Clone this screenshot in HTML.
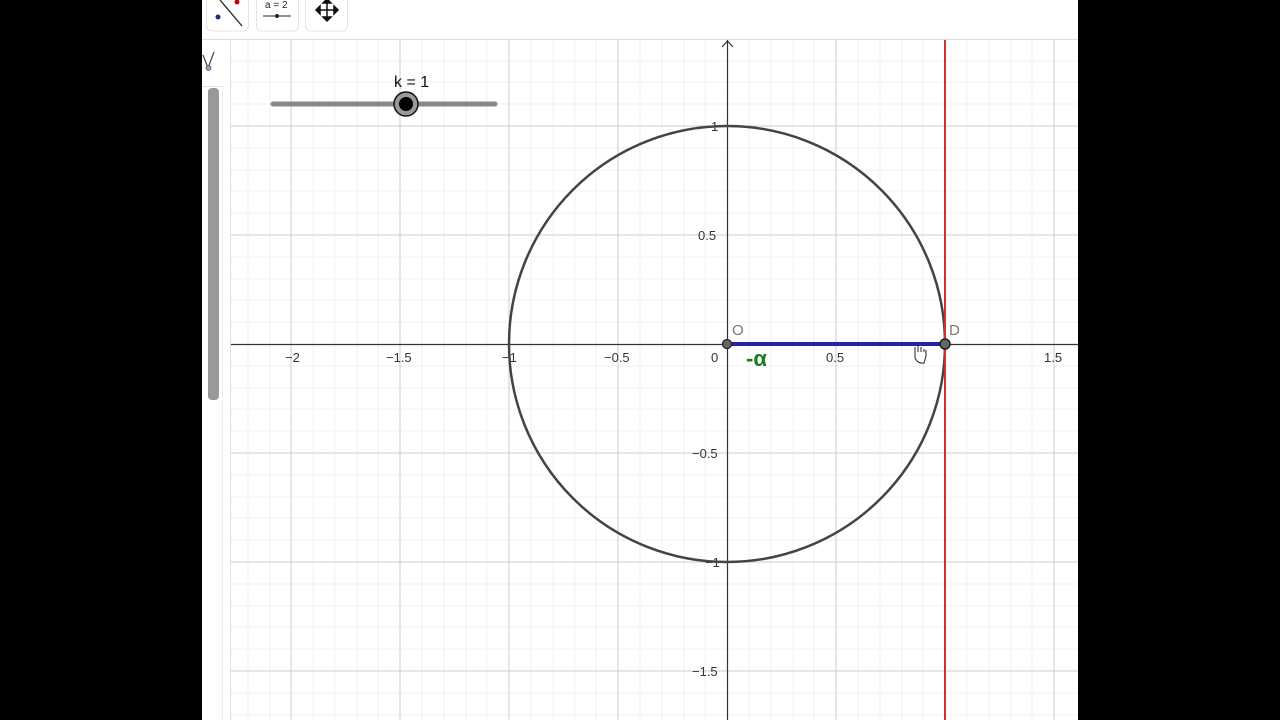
<!DOCTYPE html>
<html><head><style>
html,body{margin:0;padding:0;background:#000;width:1280px;height:720px;overflow:hidden}
svg{display:block}
text{font-family:"Liberation Sans",sans-serif}
</style></head><body>
<svg width="1280" height="720" xmlns="http://www.w3.org/2000/svg">
<rect x="0" y="0" width="1280" height="720" fill="#000"/>
<rect x="202" y="0" width="876" height="720" fill="#fff"/>
<line x1="202" y1="39.5" x2="1078" y2="39.5" stroke="#ddd"/>
<rect x="206.5" y="-5" width="42" height="36" rx="5" fill="#fff" stroke="#e4e4e4"/>
<rect x="256.5" y="-5" width="42" height="36" rx="5" fill="#fff" stroke="#e4e4e4"/>
<rect x="305.5" y="-5" width="42" height="36" rx="5" fill="#fff" stroke="#e4e4e4"/>
<line x1="220" y1="0" x2="242" y2="26" stroke="#222" stroke-width="1.3"/>
<circle cx="237" cy="2" r="2.5" fill="#c00"/>
<circle cx="218" cy="17" r="2.5" fill="#1a2a8a"/>
<text x="265" y="8" font-size="10" fill="#222">a = 2</text>
<line x1="263" y1="16" x2="291" y2="16" stroke="#222" stroke-width="1"/>
<circle cx="277" cy="16" r="2" fill="#222"/>
<g stroke="#111" stroke-width="1.5" fill="#111">
<line x1="327" y1="0" x2="327" y2="20"/><line x1="317" y1="10" x2="337" y2="10"/>
<path d="M323 3 L327 -1 L331 3Z M323 17 L327 21 L331 17Z M320 6 L316 10 L320 14Z M334 6 L338 10 L334 14Z"/>
</g>
<line x1="230.5" y1="40" x2="230.5" y2="720" stroke="#e0e0e0"/>
<line x1="202" y1="86.5" x2="222" y2="86.5" stroke="#e0e0e0"/>
<line x1="222.5" y1="86" x2="222.5" y2="720" stroke="#eee"/>
<path d="M203 55 L208 68 L214 52" fill="none" stroke="#444" stroke-width="1.2"/>
<circle cx="208.5" cy="68" r="2.5" fill="#9a9ad0" stroke="#555" stroke-width="0.8"/>
<rect x="208" y="88" width="11" height="312" rx="4" fill="#999"/>
<g stroke="#f0f0f0" stroke-width="1" shape-rendering="crispEdges">
<line x1="248" y1="40" x2="248" y2="720"/><line x1="270" y1="40" x2="270" y2="720"/><line x1="313" y1="40" x2="313" y2="720"/><line x1="335" y1="40" x2="335" y2="720"/><line x1="357" y1="40" x2="357" y2="720"/><line x1="378" y1="40" x2="378" y2="720"/><line x1="422" y1="40" x2="422" y2="720"/><line x1="444" y1="40" x2="444" y2="720"/><line x1="466" y1="40" x2="466" y2="720"/><line x1="487" y1="40" x2="487" y2="720"/><line x1="531" y1="40" x2="531" y2="720"/><line x1="553" y1="40" x2="553" y2="720"/><line x1="575" y1="40" x2="575" y2="720"/><line x1="596" y1="40" x2="596" y2="720"/><line x1="640" y1="40" x2="640" y2="720"/><line x1="662" y1="40" x2="662" y2="720"/><line x1="684" y1="40" x2="684" y2="720"/><line x1="705" y1="40" x2="705" y2="720"/><line x1="749" y1="40" x2="749" y2="720"/><line x1="771" y1="40" x2="771" y2="720"/><line x1="793" y1="40" x2="793" y2="720"/><line x1="814" y1="40" x2="814" y2="720"/><line x1="858" y1="40" x2="858" y2="720"/><line x1="880" y1="40" x2="880" y2="720"/><line x1="902" y1="40" x2="902" y2="720"/><line x1="923" y1="40" x2="923" y2="720"/><line x1="967" y1="40" x2="967" y2="720"/><line x1="989" y1="40" x2="989" y2="720"/><line x1="1011" y1="40" x2="1011" y2="720"/><line x1="1032" y1="40" x2="1032" y2="720"/>
<line x1="231" y1="61" x2="1078" y2="61"/><line x1="231" y1="82" x2="1078" y2="82"/><line x1="231" y1="104" x2="1078" y2="104"/><line x1="231" y1="148" x2="1078" y2="148"/><line x1="231" y1="170" x2="1078" y2="170"/><line x1="231" y1="191" x2="1078" y2="191"/><line x1="231" y1="213" x2="1078" y2="213"/><line x1="231" y1="257" x2="1078" y2="257"/><line x1="231" y1="279" x2="1078" y2="279"/><line x1="231" y1="300" x2="1078" y2="300"/><line x1="231" y1="322" x2="1078" y2="322"/><line x1="231" y1="366" x2="1078" y2="366"/><line x1="231" y1="388" x2="1078" y2="388"/><line x1="231" y1="409" x2="1078" y2="409"/><line x1="231" y1="431" x2="1078" y2="431"/><line x1="231" y1="475" x2="1078" y2="475"/><line x1="231" y1="497" x2="1078" y2="497"/><line x1="231" y1="518" x2="1078" y2="518"/><line x1="231" y1="540" x2="1078" y2="540"/><line x1="231" y1="584" x2="1078" y2="584"/><line x1="231" y1="606" x2="1078" y2="606"/><line x1="231" y1="627" x2="1078" y2="627"/><line x1="231" y1="649" x2="1078" y2="649"/><line x1="231" y1="693" x2="1078" y2="693"/><line x1="231" y1="715" x2="1078" y2="715"/>
</g>
<g stroke="#cdcdcd" stroke-width="1" shape-rendering="crispEdges">
<line x1="291" y1="40" x2="291" y2="720"/><line x1="400" y1="40" x2="400" y2="720"/><line x1="509" y1="40" x2="509" y2="720"/><line x1="618" y1="40" x2="618" y2="720"/><line x1="836" y1="40" x2="836" y2="720"/><line x1="945" y1="40" x2="945" y2="720"/><line x1="1054" y1="40" x2="1054" y2="720"/>
<line x1="231" y1="126" x2="1078" y2="126"/><line x1="231" y1="235" x2="1078" y2="235"/><line x1="231" y1="453" x2="1078" y2="453"/><line x1="231" y1="562" x2="1078" y2="562"/><line x1="231" y1="671" x2="1078" y2="671"/>
</g>
<g stroke="#333" stroke-width="1.2">
<line x1="231" y1="344.5" x2="1078" y2="344.5"/>
<line x1="727.5" y1="40" x2="727.5" y2="720"/>
<path d="M722 47 L727.5 41 L733 47" fill="none"/>
</g>
<g font-size="13" fill="#333">
<text x="285" y="362">−2</text><text x="386" y="362">−1.5</text><text x="502" y="362">−1</text><text x="604" y="362">−0.5</text><text x="711" y="362">0</text><text x="826" y="362">0.5</text><text x="1044" y="362">1.5</text>
<text x="711" y="131">1</text><text x="698" y="240">0.5</text><text x="692" y="458">−0.5</text><text x="705" y="567">−1</text><text x="692" y="676">−1.5</text>
</g>
<circle cx="727" cy="344" r="218" fill="none" stroke="#444" stroke-width="2.5"/>
<line x1="945" y1="40" x2="945" y2="720" stroke="#d03030" stroke-width="2"/>
<line x1="727" y1="344" x2="945" y2="344" stroke="#1f1fa0" stroke-width="4"/>
<line x1="727" y1="344" x2="945" y2="344" stroke="#3a3ad0" stroke-width="1" stroke-dasharray="2 2"/>
<circle cx="727" cy="344" r="4.5" fill="#666" stroke="#222" stroke-width="1.3"/>
<circle cx="945" cy="344" r="5" fill="#666" stroke="#222" stroke-width="1.5"/>
<text x="732" y="335" font-size="15" fill="#777">O</text>
<text x="949" y="335" font-size="15" fill="#777">D</text>
<text x="746" y="366" font-size="22" font-weight="bold" fill="#1a7a1a">-α</text>
<path d="M915 347 L915 358 Q918 364 924 363 L926 356 L926 350 M918 352 L918 345 M921 352 L921 347 M924 352 L924 349" fill="#fff" stroke="#222" stroke-width="1"/>
<line x1="273" y1="104" x2="495" y2="104" stroke="#888" stroke-width="5" stroke-linecap="round"/>
<circle cx="406" cy="104" r="12" fill="#999" stroke="#111" stroke-width="1.5"/>
<circle cx="406" cy="104" r="7" fill="#000"/>
<text x="394" y="87" font-size="16" fill="#111">k = 1</text>
</svg>
</body></html>
